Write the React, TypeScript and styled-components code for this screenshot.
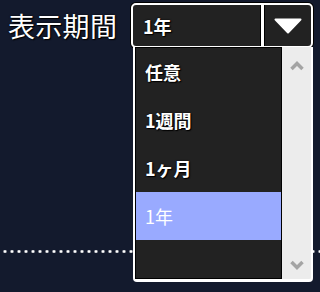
import styled, { createGlobalStyle } from "styled-components";

const GlobalStyle = createGlobalStyle`
  html, body {
    margin: 0;
    padding: 0;
    background: #131a2d;
  }
  body {
    font-family: "Noto Sans CJK JP", "Noto Sans", sans-serif;
    color: #fff;
  }
`;

const Page = styled.div`
  width: 320px;
  height: 292px;
  overflow: hidden;
  background: #131a2d;
`;

const Header = styled.div`
  display: flex;
  align-items: center;
  justify-content: space-between;
  padding: 3px 7px 0 8px;
`;

const Label = styled.span`
  font-size: 27px;
  line-height: 45px;
  letter-spacing: 0.3px;
  text-shadow: 0 0 2px #000, 1px 1px 1px #000;
`;

const SelectWrap = styled.div`
  position: relative;
  width: 182px;
  height: 45px;
`;

const SelectBox = styled.div`
  box-sizing: border-box;
  display: flex;
  height: 100%;
  border: 2px solid #fff;
  border-radius: 5px;
  background: #222;
  box-shadow: 0 0 0 1px #000;
  overflow: hidden;
`;

const Value = styled.div`
  flex: 1;
  display: flex;
  align-items: center;
  padding-left: 10px;
  font-size: 18px;
  font-weight: bold;
  text-shadow: 0 0 2px #000, 1px 1px 1px #000;
`;

const ArrowButton = styled.div`
  width: 47px;
  display: flex;
  align-items: center;
  justify-content: center;
  border-left: 3px solid #fff;
  box-shadow: inset 1px 0 0 #000, -1px 0 0 #000;
`;

const Dropdown = styled.div`
  position: absolute;
  left: 2px;
  top: 44px;
  width: 180px;
  height: 235px;
  box-sizing: border-box;
  display: flex;
  border: 2px solid #fff;
  border-top: none;
  border-bottom-width: 3px;
  border-radius: 0 0 4px 4px;
  background: #ececec;
  z-index: 2;
`;

const List = styled.ul`
  flex: 1;
  margin: 0;
  padding: 0;
  list-style: none;
  background: #222;
  border: 1px solid #000;
  overflow: hidden;
`;

const Item = styled.li<{ $selected?: boolean }>`
  height: 48px;
  display: flex;
  align-items: center;
  padding-left: 9px;
  font-size: 18px;
  font-weight: ${(p) => (p.$selected ? "normal" : "bold")};
  background: ${(p) => (p.$selected ? "#99aaff" : "transparent")};
  text-shadow: ${(p) =>
    p.$selected ? "none" : "0 0 2px #000, 1px 1px 1px #000"};
`;

const ScrollBar = styled.div`
  width: 29px;
  display: flex;
  flex-direction: column;
  align-items: center;
  justify-content: space-between;
  padding: 14px 0 9px;
`;

const Dotted = styled.div`
  margin-top: 202px;
  height: 3px;
  background-image: radial-gradient(circle, #fff 1.2px, transparent 1.7px);
  background-size: 7px 3px;
  background-position: 1.5px 0;
`;

const Chevron = ({ up }: { up?: boolean }) => (
  <svg width="16" height="10" viewBox="0 0 16 10">
    <polyline
      points={up ? "2.5,8 8,2.5 13.5,8" : "2.5,2 8,7.5 13.5,2"}
      fill="none"
      stroke="#a4a4a4"
      strokeWidth="3.5"
    />
  </svg>
);

const options = ["任意", "1週間", "1ヶ月", "1年", ""];

export default function App() {
  const selected = "1年";
  return (
    <Page>
      <GlobalStyle />
      <Header>
        <Label>表示期間</Label>
        <SelectWrap>
          <SelectBox>
            <Value>{selected}</Value>
            <ArrowButton>
              <svg width="28" height="16" viewBox="0 0 28 16">
                <polygon
                  points="1.5,1.5 26.5,1.5 14,14.5"
                  fill="#fff"
                  stroke="#fff"
                  strokeWidth="2"
                  strokeLinejoin="round"
                />
              </svg>
            </ArrowButton>
          </SelectBox>
          <Dropdown>
            <List>
              {options.map((o, i) => (
                <Item key={i} $selected={o === selected}>
                  {o}
                </Item>
              ))}
            </List>
            <ScrollBar>
              <Chevron up />
              <Chevron />
            </ScrollBar>
          </Dropdown>
        </SelectWrap>
      </Header>
      <Dotted />
    </Page>
  );
}
